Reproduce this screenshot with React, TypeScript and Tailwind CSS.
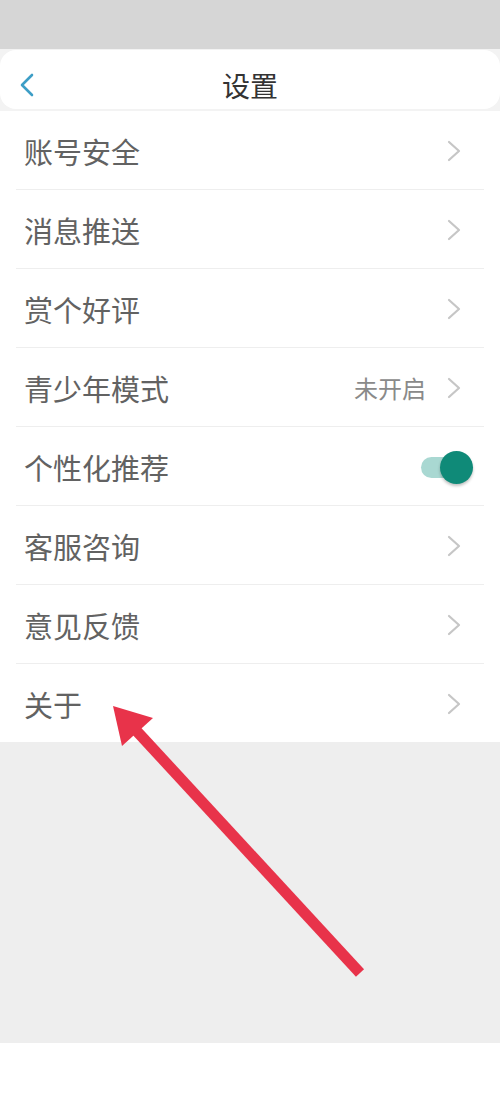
import React from "react";

const Chevron = () => (
  <svg width="14" height="22" viewBox="0 0 14 22" className="shrink-0">
    <polyline points="2,2 12,11 2,20" fill="none" stroke="#c6c6c6" strokeWidth="2.2" strokeLinecap="round" strokeLinejoin="round" />
  </svg>
);

type Row = { label: string; value?: string; toggle?: boolean };

const rows: Row[] = [
  { label: "账号安全" },
  { label: "消息推送" },
  { label: "赏个好评" },
  { label: "青少年模式", value: "未开启" },
  { label: "个性化推荐", toggle: true },
  { label: "客服咨询" },
  { label: "意见反馈" },
  { label: "关于" },
];

export default function App() {
  return (
    <div
      className="relative w-[500px] h-[1111px] bg-white flex flex-col overflow-hidden"
      style={{ fontFamily: '"Noto Sans CJK SC", "Noto Sans", sans-serif' }}
    >
      <div className="h-[49px] bg-[#d6d6d6] shrink-0" />
      <div className="bg-[#f3f3f3] pt-[1px] pb-[2px] shrink-0">
        <div className="relative h-[59px] bg-white rounded-[16px] flex items-center justify-center pt-[10px]">
          <div className="absolute left-[19px] top-[23px]">
            <svg width="16" height="24" viewBox="0 0 16 24">
              <polyline points="13,2 3,12 13,22" fill="none" stroke="#3d9ec6" strokeWidth="2.6" strokeLinecap="round" strokeLinejoin="round" />
            </svg>
          </div>
          <span className="text-[28px] leading-none text-[#333333]">设置</span>
        </div>
      </div>
      <div className="bg-white shrink-0">
        {rows.map((r, i) => (
          <div
            key={r.label}
            className={
              i === rows.length - 1
                ? "mx-[16px] h-[78px] flex items-center justify-between pl-[8px] pr-[23px]"
                : "mx-[16px] h-[79px] flex items-center justify-between pl-[8px] pr-[23px] border-b border-[#eeeeee]"
            }
          >
            <span className="text-[29px] leading-none text-[#626262] pt-[3px]">{r.label}</span>
            {r.toggle ? (
              <div className="flex items-center mr-[-12px] pt-[2px]">
                <div className="w-[38px] h-[21px] rounded-full bg-[#a9d8d2]" />
                <div className="-ml-[19px] w-[33px] h-[33px] rounded-full bg-[#0f8a78] shadow-[0_2px_3px_rgba(0,0,0,0.25)]" />
              </div>
            ) : (
              <div className="flex items-center gap-[21px] pt-[1px]">
                {r.value && <span className="text-[24px] leading-none text-[#8a8a8a]">{r.value}</span>}
                <Chevron />
              </div>
            )}
          </div>
        ))}
      </div>
      <div className="h-[301px] bg-[#eeeeee] shrink-0" />
      <div className="flex-1 bg-white" />
      <svg className="absolute left-0 top-0 pointer-events-none" width="500" height="1111" viewBox="0 0 500 1111">
        <line x1="360" y1="973" x2="132" y2="726" stroke="#e8334a" strokeWidth="11" />
        <polygon points="113,706 122,746 153,718" fill="#e8334a" />
      </svg>
    </div>
  );
}
